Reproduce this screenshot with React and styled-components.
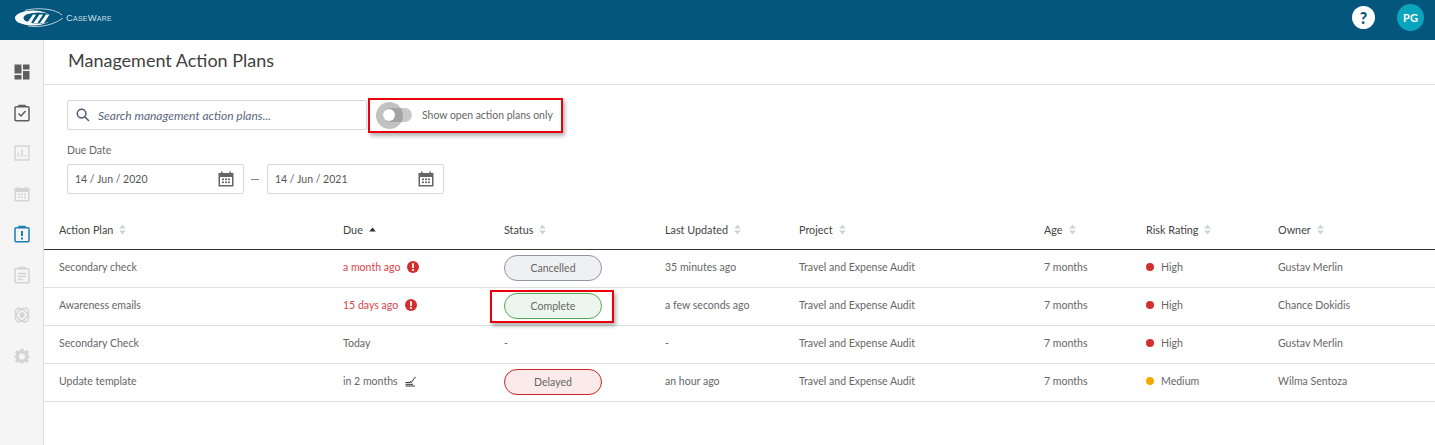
import React from "react";
import styled, { createGlobalStyle } from "styled-components";

const GlobalStyle = createGlobalStyle`
  html, body { margin: 0; padding: 0; background: #fff; }
  body { font-family: Lato, "Open Sans", sans-serif; color: #4a4a4a; }
`;

const rows = [
  { plan: "Secondary check", due: "a month ago", overdue: true, status: "Cancelled", updated: "35 minutes ago", risk: "High", owner: "Gustav Merlin" },
  { plan: "Awareness emails", due: "15 days ago", overdue: true, status: "Complete", updated: "a few seconds ago", risk: "High", owner: "Chance Dokidis", marked: true },
  { plan: "Secondary Check", due: "Today", status: "-", updated: "-", risk: "High", owner: "Gustav Merlin" },
  { plan: "Update template", due: "in 2 months", signed: true, status: "Delayed", updated: "an hour ago", risk: "Medium", owner: "Wilma Sentoza" }
];

const columns = [
  { label: "Action Plan" },
  { label: "Due", sorted: true },
  { label: "Status" },
  { label: "Last Updated" },
  { label: "Project" },
  { label: "Age" },
  { label: "Risk Rating" },
  { label: "Owner" }
];

const Logo = () => (
  <svg width="50" height="20" viewBox="0 0 50 20">
    <ellipse cx="19" cy="10" rx="18" ry="7.5" fill="#fff" />
    <ellipse cx="24.5" cy="10" rx="15" ry="5.6" fill="#04567d" />
    <path d="M13 15 L19 6.5 H22 L17 15 Z M19.5 15 L25.5 6.5 H29 L23.5 15 Z M26 15 L32 6.5 H35.5 L30 15 Z" fill="#fff" />
    <path d="M11 2.4 C24 -1 42 1 48 7" fill="none" stroke="#fff" strokeWidth="0.7" />
    <path d="M14 18 C28 20 41 16 49 10" fill="none" stroke="#fff" strokeWidth="0.7" />
  </svg>
);

const NavDashboard = () => (
  <svg width="16" height="16" viewBox="0 0 16 16" fill="currentColor">
    <rect x="0.5" y="0.5" width="7" height="9" /><rect x="9" y="0.5" width="6.5" height="5" />
    <rect x="0.5" y="11" width="7" height="4.5" /><rect x="9" y="7" width="6.5" height="8.5" />
  </svg>
);

const ClipFrame = ({ children }) => (
  <svg width="16" height="18" viewBox="0 0 16 18" fill="none" stroke="currentColor" strokeWidth="1.5">
    <rect x="1" y="2.8" width="14" height="14" rx="1" />
    <path d="M5 2.8 V1.4 H11 V2.8" />
    {children}
  </svg>
);

const NavReport = () => (
  <svg width="16" height="16" viewBox="0 0 16 16" fill="none" stroke="currentColor" strokeWidth="1.4">
    <rect x="1" y="1" width="14" height="14" />
    <path d="M4.5 12 V8 M8 12 V4.5 M11.5 12 V10" />
  </svg>
);

const Calendar = ({ size = 16 }) => (
  <svg width={size} height={size} viewBox="0 0 16 16" fill="currentColor">
    <path d="M3 0.5 H4.5 V2 H11.5 V0.5 H13 V2 H15.5 V15.5 H0.5 V2 H3 Z M2 6 V14 H14 V6 Z" />
    <rect x="4" y="7.5" width="2" height="1.6" /><rect x="7" y="7.5" width="2" height="1.6" /><rect x="10" y="7.5" width="2" height="1.6" />
    <rect x="4" y="10.5" width="2" height="1.6" /><rect x="7" y="10.5" width="2" height="1.6" /><rect x="10" y="10.5" width="2" height="1.6" />
  </svg>
);

const NavGear = () => (
  <svg width="16" height="16" viewBox="0 0 16 16" fill="currentColor">
    <path fillRule="evenodd" d="M6.6 0.5 H9.4 L9.8 2.6 L11.3 3.2 L13.1 2 L15 4 L13.8 5.7 L14.4 7.2 L15.5 7.4 V9.6 L14.4 9.8 L13.8 11.3 L15 13 L13 15 L11.3 13.8 L9.8 14.4 L9.4 15.5 H6.6 L6.2 14.4 L4.7 13.8 L3 15 L1 13 L2.2 11.3 L1.6 9.8 L0.5 9.6 V7.4 L1.6 7.2 L2.2 5.7 L1 4 L3 2 L4.7 3.2 L6.2 2.6 Z M8 5.4 A3.1 3.1 0 1 0 8 11.6 A3.1 3.1 0 1 0 8 5.4 Z" />
  </svg>
);

const NavOrbit = () => (
  <svg width="16" height="16" viewBox="0 0 16 16" fill="none" stroke="currentColor" strokeWidth="1.4">
    <ellipse cx="8" cy="8" rx="8" ry="5" transform="rotate(45 8 8)" />
    <ellipse cx="8" cy="8" rx="8" ry="5" transform="rotate(-45 8 8)" />
    <circle cx="8" cy="8" r="2" fill="currentColor" />
  </svg>
);

const navItems = [
  { key: "dash", tone: "dark", icon: <NavDashboard /> },
  { key: "check", tone: "dark", icon: <ClipFrame><path d="M4.5 9.5 L7 12 L11.5 7" /></ClipFrame> },
  { key: "report", tone: "faded", icon: <NavReport /> },
  { key: "calendar", tone: "faded", icon: <Calendar /> },
  { key: "plans", tone: "active", icon: <ClipFrame><path d="M8 6 V11 M8 12.5 V14.5" strokeWidth="2" /></ClipFrame> },
  { key: "notes", tone: "faded", icon: <ClipFrame><path d="M4 7.5 H12 M4 10.5 H12 M4 13.5 H9" /></ClipFrame> },
  { key: "orbit", tone: "faded", icon: <NavOrbit /> },
  { key: "gear", tone: "faded", icon: <NavGear /> }
];

const SearchIcon = () => (
  <svg width="14" height="14" viewBox="0 0 14 14" fill="none" stroke="#4f5b76" strokeWidth="1.5">
    <circle cx="5.6" cy="5.6" r="4.3" /><path d="M8.8 8.8 L13 13" />
  </svg>
);

const SortArrows = () => (
  <svg width="7" height="11" viewBox="0 0 7 11" fill="#d0d3d6">
    <path d="M3.5 0.5 L6.8 4.5 H0.2 Z M3.5 10.5 L6.8 6.5 H0.2 Z" />
  </svg>
);

const SortedArrow = () => (
  <svg width="7" height="5" viewBox="0 0 7 5" fill="#333">
    <path d="M3.5 0.5 L6.8 4.5 H0.2 Z" />
  </svg>
);

const AlertIcon = () => (
  <svg width="12" height="12" viewBox="0 0 12 12">
    <circle cx="6" cy="6" r="6" fill="#d32f2f" />
    <path d="M6 2.3 V7" stroke="#fff" strokeWidth="1.8" /><rect x="5.1" y="8" width="1.8" height="1.8" fill="#fff" />
  </svg>
);

const SignIcon = () => (
  <svg width="11" height="11" viewBox="0 0 11 11" fill="none" stroke="#333" strokeWidth="1">
    <path d="M0.5 6.5 H5.5 M0.5 8.3 H8 M0.5 10 H10 M5 5 L6.3 6.4 L10.5 0.8" />
  </svg>
);

export default function App() {
  return (
    <Page>
      <GlobalStyle />
      <TopBar>
        <Brand>
          <Logo />
          <BrandName>CaseWare</BrandName>
        </Brand>
        <TopActions>
          <HelpButton>?</HelpButton>
          <Avatar>PG</Avatar>
        </TopActions>
      </TopBar>
      <Body>
        <SideNav>
          {navItems.map(item => (
            <NavItem key={item.key} $tone={item.tone}>{item.icon}</NavItem>
          ))}
        </SideNav>
        <Main>
          <TitleBar>
            <Title>Management Action Plans</Title>
          </TitleBar>
          <Filters>
            <FilterRow>
              <SearchBox>
                <SearchIcon />
                <SearchText>Search management action plans...</SearchText>
              </SearchBox>
              <ToggleGroup>
                <ToggleTrack>
                  <ToggleHalo />
                  <ToggleKnob />
                </ToggleTrack>
                <ToggleLabel>Show open action plans only</ToggleLabel>
                <ToggleMarker />
              </ToggleGroup>
            </FilterRow>
            <DateLabel>Due Date</DateLabel>
            <DateRow>
              <DateInput>14 / Jun / 2020<Calendar /></DateInput>
              <DateDash />
              <DateInput>14 / Jun / 2021<Calendar /></DateInput>
            </DateRow>
          </Filters>
          <HeadRow>
            {columns.map(col => (
              <HeadCell key={col.label}>
                {col.label}
                {col.sorted ? <SortedArrow /> : <SortArrows />}
              </HeadCell>
            ))}
          </HeadRow>
          {rows.map(row => (
            <Row key={row.plan}>
              <Cell>{row.plan}</Cell>
              <Cell $overdue={row.overdue}>
                {row.due}
                {row.overdue && <AlertIcon />}
                {row.signed && <SignIcon />}
              </Cell>
              <Cell>
                {row.status === "-" ? "-" : <StatusPill $status={row.status}>{row.status}</StatusPill>}
                {row.marked && <PillMarker />}
              </Cell>
              <Cell>{row.updated}</Cell>
              <Cell>Travel and Expense Audit</Cell>
              <Cell>7 months</Cell>
              <Cell><RiskDot $risk={row.risk} />{row.risk}</Cell>
              <Cell>{row.owner}</Cell>
            </Row>
          ))}
        </Main>
      </Body>
    </Page>
  );
}

const gridColumns = "284px 161px 161px 134px 245px 102px 132px 1fr";

const statusColors = {
  Cancelled: { border: "#8d96a3", bg: "#eff0f3" },
  Complete: { border: "#4fae54", bg: "#edf6ee" },
  Delayed: { border: "#c62828", bg: "#faeaea" }
};

const navColors = { dark: "#5f5f5f", faded: "#d4d4d4", active: "#1b7fb5" };

const Page = styled.div`
  width: 1435px;
  height: 445px;
  overflow: hidden;
  display: flex;
  flex-direction: column;
`;

const TopBar = styled.header`
  height: 40px;
  flex: none;
  box-sizing: border-box;
  background: #04567d;
  display: flex;
  align-items: center;
  justify-content: space-between;
  padding: 0 11px 5px 14px;
`;

const Brand = styled.div`
  display: flex;
  align-items: center;
  gap: 2px;
`;

const BrandName = styled.span`
  font-family: "Liberation Sans", sans-serif;
  font-size: 9.5px;
  font-variant: small-caps;
  color: #cfdfe8;
  letter-spacing: 0.2px;
`;

const TopActions = styled.div`
  display: flex;
  align-items: center;
  gap: 22px;
`;

const HelpButton = styled.div`
  width: 23px;
  height: 23px;
  border-radius: 50%;
  background: #fff;
  color: #04567d;
  font-size: 16px;
  font-weight: 900;
  display: flex;
  align-items: center;
  justify-content: center;
`;

const Avatar = styled.div`
  width: 27px;
  height: 27px;
  border-radius: 50%;
  background: #0aa5bd;
  color: #fff;
  font-size: 11px;
  font-weight: 700;
  display: flex;
  align-items: center;
  justify-content: center;
`;

const Body = styled.div`
  flex: 1;
  display: flex;
  min-height: 0;
`;

const SideNav = styled.nav`
  width: 43px;
  flex: none;
  background: #f5f5f5;
  border-right: 1px solid #dcdde0;
  display: flex;
  flex-direction: column;
  align-items: center;
  padding-top: 12px;
`;

const NavItem = styled.div`
  height: 40.5px;
  width: 16px;
  flex: none;
  display: flex;
  align-items: center;
  justify-content: center;
  color: ${({ $tone }) => navColors[$tone]};
`;

const Main = styled.main`
  flex: 1;
  min-width: 0;
`;

const TitleBar = styled.div`
  height: 45px;
  box-sizing: border-box;
  border-bottom: 1px solid #dfe0e2;
  padding: 0 0 4px 24px;
  display: flex;
  align-items: center;
`;

const Title = styled.h1`
  margin: 0;
  font-size: 18px;
  font-weight: 400;
  color: #3f3f3f;
`;

const Filters = styled.section`
  padding: 15px 0 0 23px;
`;

const FilterRow = styled.div`
  display: flex;
  align-items: center;
  height: 30px;
`;

const SearchBox = styled.div`
  width: 300px;
  height: 30px;
  box-sizing: border-box;
  border: 1px solid #d6d8dc;
  border-radius: 2px;
  display: flex;
  align-items: center;
  gap: 8px;
  padding-left: 8px;
`;

const SearchText = styled.span`
  font-size: 12px;
  font-style: italic;
  color: #5b6780;
`;

const ToggleGroup = styled.div`
  position: relative;
  margin-left: 1px;
  display: flex;
  align-items: center;
  height: 29px;
  padding: 0 10px 0 15px;
  gap: 10px;
`;

const ToggleTrack = styled.div`
  position: relative;
  width: 29px;
  height: 14px;
  border-radius: 7px;
  background: #c9c9c9;
`;

const ToggleHalo = styled.div`
  position: absolute;
  left: -7px;
  top: -6.5px;
  width: 27px;
  height: 27px;
  border-radius: 50%;
  background: rgba(120, 120, 120, 0.45);
`;

const ToggleKnob = styled.div`
  position: absolute;
  left: 0;
  top: 1px;
  width: 12px;
  height: 12px;
  border-radius: 50%;
  background: #fff;
`;

const ToggleLabel = styled.span`
  font-size: 10.45px;
  color: #666;
  white-space: nowrap;
`;

const Marker = styled.div`
  position: absolute;
  box-sizing: border-box;
  border: 2px solid #e8000d;
  box-shadow: 2px 3px 4px rgba(0, 0, 0, 0.3);
  pointer-events: none;
`;

const ToggleMarker = styled(Marker)`
  inset: -3px 0;
`;

const PillMarker = styled(Marker)`
  left: -14px;
  width: 124px;
  top: 2px;
  bottom: 2px;
`;

const DateLabel = styled.div`
  font-size: 10.5px;
  color: #666;
  margin-top: 13px;
  line-height: 14px;
`;

const DateRow = styled.div`
  display: flex;
  align-items: center;
  margin-top: 7px;
`;

const DateInput = styled.div`
  width: 177px;
  height: 30px;
  box-sizing: border-box;
  border: 1px solid #d6d8dc;
  border-radius: 2px;
  display: flex;
  align-items: center;
  justify-content: space-between;
  padding: 0 9px 0 7px;
  font-size: 10.5px;
  color: #555;

  svg { color: #666; }
`;

const DateDash = styled.div`
  width: 8px;
  height: 1px;
  background: #888;
  margin: 0 8px 0 7px;
`;

const HeadRow = styled.div`
  display: grid;
  grid-template-columns: ${gridColumns};
  height: 56px;
  box-sizing: border-box;
  padding: 25px 0 0 15px;
  border-bottom: 1px solid #333;
`;

const HeadCell = styled.div`
  display: flex;
  align-items: center;
  gap: 6px;
  height: 20px;
  font-size: 10.8px;
  color: #444;
`;

const Row = styled.div`
  display: grid;
  grid-template-columns: ${gridColumns};
  height: 38px;
  box-sizing: border-box;
  padding-left: 15px;
  border-bottom: 1px solid #dedfe1;
  align-items: center;
`;

const Cell = styled.div`
  position: relative;
  height: 100%;
  box-sizing: border-box;
  padding-bottom: 3px;
  display: flex;
  align-items: center;
  gap: 7px;
  font-size: 10.55px;
  color: ${({ $overdue }) => ($overdue ? "#d9434a" : "#666")};
`;

const StatusPill = styled.div`
  width: 98px;
  height: 26px;
  margin-top: 2px;
  box-sizing: border-box;
  border-radius: 13px;
  border: 1px solid ${({ $status }) => statusColors[$status].border};
  background: ${({ $status }) => statusColors[$status].bg};
  display: flex;
  align-items: center;
  justify-content: center;
  color: #666;
`;

const RiskDot = styled.span`
  width: 8px;
  height: 8px;
  border-radius: 50%;
  background: ${({ $risk }) => ($risk === "High" ? "#d32f2f" : "#f5a800")};
`;
